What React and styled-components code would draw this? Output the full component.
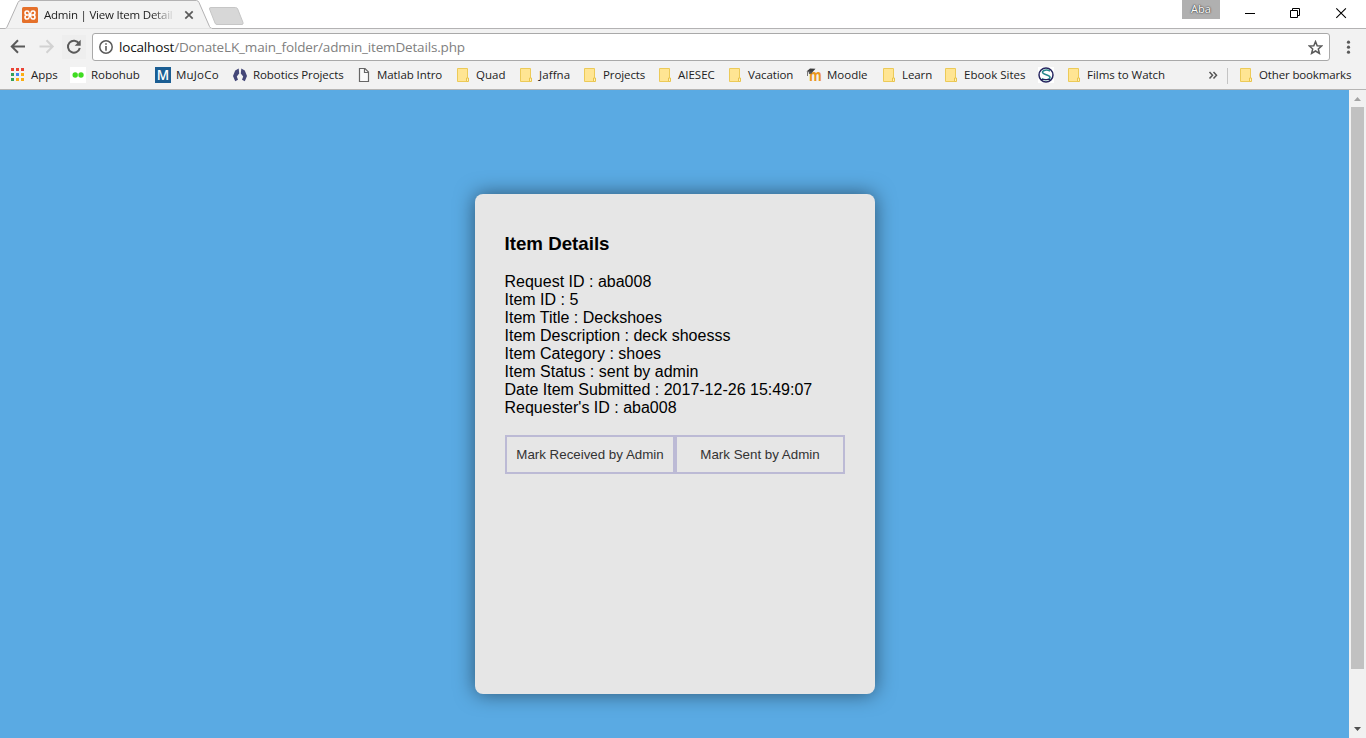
import React from 'react';
import styled, { createGlobalStyle } from 'styled-components';

const Global = createGlobalStyle`
  * { box-sizing: border-box; }
  html, body { margin: 0; padding: 0; overflow: hidden; }
  svg { display: block; flex: none; }
`;

const ui = '"Open Sans", "Noto Sans", sans-serif';

const Browser = styled.div`
  width: 1366px;
  height: 738px;
  display: flex;
  flex-direction: column;
  overflow: hidden;
  font-family: ${ui};
  background: #fff;
`;

const TitleBar = styled.header`
  height: 29px;
  flex: none;
  display: flex;
  background: #fff;
  border-bottom: 1px solid #b3b2b3;
`;

const Tab = styled.div`
  position: relative;
  width: 209px;
  height: 29px;
  padding: 0 0 0 22px;
  display: flex;
  align-items: center;
`;

const TabShape = styled.svg`
  position: absolute;
  left: 0;
  top: 0;
`;

const TabContent = styled.div`
  position: relative;
  display: flex;
  align-items: center;
  height: 29px;
`;

const TabTitle = styled.span`
  width: 131px;
  margin-left: 6px;
  white-space: nowrap;
  font-size: 11.5px;
  line-height: 20px;
  letter-spacing: -0.22px;
  color: #222;
  mask-image: linear-gradient(to right, #000 108px, transparent 131px);
`;

const CloseTab = styled.svg`
  margin-left: 9px;
`;

const Spacer = styled.div`
  flex: 1;
`;

const Profile = styled.div`
  width: 38px;
  height: 19px;
  background: #b0b0b0;
  color: #fff;
  font-size: 11px;
  line-height: 18px;
  text-align: center;
  text-shadow: 0 0 2px #333, 0 0 1px #333;
`;

const WindowButtons = styled.div`
  display: flex;
  width: 146px;
  height: 28px;
  padding-left: 7px;
`;

const Toolbar = styled.div`
  height: 34px;
  flex: none;
  display: flex;
  align-items: center;
  padding: 2px 0 0 8px;
  background: #f2f2f2;
`;

const NavButton = styled.div`
  width: 24px;
  height: 24px;
  margin-right: ${(p) => p.$gap || 0}px;
  display: flex;
  align-items: center;
  justify-content: center;
  background: ${(p) => (p.$active ? '#eeeeee' : 'transparent')};
`;

const AddressBar = styled.div`
  width: 1238px;
  height: 28px;
  margin-left: 6px;
  padding: 0 6px 0 6px;
  display: flex;
  align-items: center;
  background: #fff;
  border: 1px solid #a9a9a9;
  border-radius: 3px;
`;

const Url = styled.span`
  flex: 1;
  margin-left: 6px;
  font-size: 13.5px;
  line-height: 24px;
  letter-spacing: -0.16px;
  color: #808080;
  white-space: nowrap;
`;

const Host = styled.span`
  color: #111;
`;

const Menu = styled.svg`
  margin-left: 10px;
`;

const Bookmarks = styled.nav`
  height: 27px;
  flex: none;
  display: flex;
  padding: 0 0 2px 10px;
  background: #f2f2f2;
  border-bottom: 1px solid #b6b5b4;
`;

const Bookmark = styled.div`
  width: ${(p) => p.$width}px;
  display: flex;
  align-items: center;
  gap: 5px;
  flex: none;
`;

const Label = styled.span`
  font-size: 11.5px;
  line-height: 20px;
  letter-spacing: ${(p) => p.$track || 0}px;
  color: #222;
  white-space: nowrap;
`;

const Divider = styled.div`
  width: 1px;
  height: 16px;
  margin: 5px 10px 0 9px;
  background: #c4c4c4;
`;

const Viewport = styled.div`
  flex: 1;
  min-height: 0;
  display: flex;
`;

const Page = styled.main`
  flex: 1;
  display: flex;
  justify-content: center;
  align-items: flex-start;
  padding: 104px 0 0 1px;
  background: #5aaae3;
  overflow: hidden;
  font-family: "Liberation Sans", Arial, sans-serif;
`;

const Card = styled.section`
  width: 400px;
  height: 500px;
  padding: 39px 30px 0;
  border-radius: 8px;
  background: #e6e6e6;
  box-shadow: 0 0 20px rgba(0, 0, 0, 0.5);
`;

const Heading = styled.h3`
  margin: 0 0 19px -0.5px;
  font-size: 18.72px;
  line-height: 21px;
  color: #000;
`;

const Detail = styled.div`
  margin-left: -0.5px;
  font-size: 16px;
  line-height: 18px;
  color: #000;
  white-space: nowrap;
`;

const Actions = styled.div`
  display: flex;
  margin-top: 18px;
`;

const Action = styled.button`
  width: 170px;
  height: 39px;
  padding: 0;
  border: 2px solid #bcbad5;
  background: transparent;
  font-family: "Liberation Sans", Arial, sans-serif;
  font-size: 13.333px;
  color: #333;
  white-space: nowrap;
`;

const Scrollbar = styled.div`
  width: 17px;
  flex: none;
  display: flex;
  flex-direction: column;
  align-items: center;
  background: #f1f1f1;
`;

const Thumb = styled.div`
  width: 13px;
  height: 562px;
  background: #c1c1c1;
`;

const Folder = () => (
  <svg width="16" height="16" viewBox="0 0 16 16">
    <path d="M2.500 1.500h10v13h-10z" fill="#ffe593" stroke="#ecca58" />
    <path d="M11.500 11h2v3.500h-2z" fill="#fff0bb" stroke="#e9c44c" />
  </svg>
);

const gridColors = ['#ea4335', '#ea4335', '#ea4335', '#34a05a', '#4285f4', '#fbae13', '#34a05a', '#fbae13', '#fbae13'];
const AppsIcon = () => (
  <svg width="16" height="16" viewBox="0 0 16 16">
    {gridColors.map((c, i) => (
      <rect key={i} x={1 + (i % 3) * 5} y={1 + Math.floor(i / 3) * 5} width="3" height="3" fill={c} />
    ))}
  </svg>
);

const RobohubIcon = () => (
  <svg width="16" height="16">
    <rect width="16" height="16" fill="#fff" />
    <circle cx="5.200" cy="8" r="2.700" fill="#3fdc21" />
    <circle cx="11" cy="8" r="2.700" fill="#3fdc21" />
  </svg>
);

const MujocoIcon = () => (
  <svg width="16" height="16">
    <rect width="16" height="16" fill="#1b5e93" />
    <text x="8" y="13" textAnchor="middle" fontFamily="Open Sans" fontSize="13.500" fontWeight="600" fill="#fff">M</text>
  </svg>
);

const RoboticsIcon = () => (
  <svg width="16" height="16" viewBox="0 0 16 16" fill="#444778">
    <path d="M6.700 1.500 3.200 3.600 1 9l2.200 5.200 2.800-1.500L4.800 9.400l2.400-3z" />
    <path d="M9.300 1.500l3.500 2.100L15 9l-2.200 5.200-2.800-1.500 1.200-3.300-2.400-3z" />
  </svg>
);

const FileIcon = () => (
  <svg width="16" height="16" viewBox="0 0 16 16" fill="#fafafa" stroke="#666" strokeWidth="1.200">
    <path d="M3.500 1.500h5.500l3.500 3.500v9.500h-9z" />
    <path d="M8.500 1.500v4h4" fill="none" />
  </svg>
);

const MoodleIcon = () => (
  <svg width="16" height="16" viewBox="0 0 16 16">
    <text x="3" y="14" fontFamily="Open Sans" fontSize="16" fontWeight="700" textLength="12.800" lengthAdjust="spacingAndGlyphs" fill="#eb971f">m</text>
    <path d="M.5 4.500 4 1.500 9.500 1.800 6.300 5.300z" fill="#3d3d3d" />
    <path d="M2.500 4.500 3 7l3-.5.5-2" fill="#555" />
    <path d="M1.500 4.500V9" stroke="#777" fill="none" />
  </svg>
);

const SwirlIcon = () => (
  <svg width="16" height="16" viewBox="0 0 16 16" fill="none">
    <rect width="16" height="16" fill="#fff" />
    <circle cx="8" cy="8" r="7" fill="#fff" stroke="#26265f" strokeWidth="1.500" />
    <path d="M12 4.200C9.500 2.400 4.500 2.800 4.500 5.300S12 7.700 12 10.300s-5.500 3.200-8 1.200" stroke="#26898c" strokeWidth="1.500" />
    <path d="M3 12.500h9.500" stroke="#26265f" />
  </svg>
);

const bookmarks = [
  { icon: AppsIcon, label: 'Apps', width: 60 },
  { icon: RobohubIcon, label: 'Robohub', width: 85, track: -0.05 },
  { icon: MujocoIcon, label: 'MuJoCo', width: 77, track: 0.2 },
  { icon: RoboticsIcon, label: 'Robotics Projects', width: 124, track: -0.08 },
  { icon: FileIcon, label: 'Matlab Intro', width: 99, track: -0.08 },
  { icon: Folder, label: 'Quad', width: 63 },
  { icon: Folder, label: 'Jaffna', width: 64, track: 0.1 },
  { icon: Folder, label: 'Projects', width: 75, track: -0.1 },
  { icon: Folder, label: 'AIESEC', width: 70 },
  { icon: Folder, label: 'Vacation', width: 79, track: -0.1 },
  { icon: MoodleIcon, label: 'Moodle', width: 75 },
  { icon: Folder, label: 'Learn', width: 62, track: -0.1 },
  { icon: Folder, label: 'Ebook Sites', width: 95 },
  { icon: SwirlIcon, label: '', width: 28 },
  { icon: Folder, label: 'Films to Watch', width: 142, track: -0.03 },
];

const details = [
  ['Request ID', 'aba008'],
  ['Item ID', '5'],
  ['Item Title', 'Deckshoes'],
  ['Item Description', 'deck shoesss'],
  ['Item Category', 'shoes'],
  ['Item Status', 'sent by admin'],
  ['Date Item Submitted', '2017-12-26 15:49:07'],
  ["Requester's ID", 'aba008'],
];

export default function App() {
  return (
    <Browser>
      <Global />
      <TitleBar>
        <Tab>
          <TabShape width="250" height="29" viewBox="0 0 250 29">
            <path d="M0 28.500H4.500C6 28.500 6.500 28 7 27L18 2.500Q19 .5 20.500 .5H196.500Q198 .5 199 2.500L209.500 26.500Q210.500 28.500 212 28.500" fill="#f2f2f2" stroke="#b3b2b3" />
            <path d="M5.500 29V28.500H212V29z" fill="#f2f2f2" />
            <path d="M211 7.500H235.500Q237 7.500 237.700 9L243 22.500Q243.500 24.500 242 24.500H217Q215.500 24.500 215 23L209.500 9Q209 7.500 211 7.500z" fill="#d7d7d7" stroke="#c6c6c6" />
          </TabShape>
          <TabContent>
            <svg width="16" height="16" viewBox="0 0 16 16">
              <rect width="16" height="16" rx="1.500" fill="#e5702a" />
              <path d="M7 5.700A2 2 0 1 0 5 8H11A2 2 0 1 0 9 5.700M7 10.300A2 2 0 1 1 5 8M11 8A2 2 0 1 1 9 10.300M7 5.700 9 10.300M9 5.700 7 10.300" fill="none" stroke="#fff" strokeWidth="1.600" />
            </svg>
            <TabTitle>Admin | View Item Detail</TabTitle>
            <CloseTab width="10" height="10" viewBox="0 0 10 10">
              <path d="M1.300 1.300 8.700 8.700M8.700 1.300 1.300 8.700" stroke="#5a5a5a" strokeWidth="1.700" />
            </CloseTab>
          </TabContent>
        </Tab>
        <Spacer />
        <Profile>Aba</Profile>
        <WindowButtons>
          <svg width="139" height="28" viewBox="0 0 139 28" fill="none" stroke="#000">
            <path d="M18 13.500h10M63.500 10.500h7v7h-7zM65.500 10.500v-2h7v7h-2" />
            <path d="M109.300 8.300l9.600 9.600M118.900 8.300l-9.600 9.600" strokeWidth="1.100" />
          </svg>
        </WindowButtons>
      </TitleBar>
      <Toolbar>
        <NavButton $gap={4}>
          <svg width="24" height="24" viewBox="0 0 24 24" fill="none" stroke="#5a5a5a" strokeWidth="2">
            <path d="M17 11.500H4M10 5.300 3.800 11.500 10 17.700" />
          </svg>
        </NavButton>
        <NavButton $gap={2}>
          <svg width="24" height="24" viewBox="0 0 24 24" fill="none" stroke="#d2d2d2" strokeWidth="2">
            <path d="M3.500 11.500h13M10.500 5.300l6.200 6.200-6.200 6.200" />
          </svg>
        </NavButton>
        <NavButton $active>
          <svg width="24" height="24" viewBox="0 0 24 24">
            <path d="M17 8.400A6 6 0 1 0 17.800 13" fill="none" stroke="#5a5a5a" strokeWidth="2" />
            <path d="M18.700 4.700v6h-6z" fill="#5a5a5a" />
          </svg>
        </NavButton>
        <AddressBar>
          <svg width="14" height="14" viewBox="0 0 14 14">
            <circle cx="7" cy="7" r="6.200" fill="none" stroke="#5a5a5a" strokeWidth="1.500" />
            <path d="M6.200 3.200h1.600v1.600H6.200zM6.200 6h1.600v4.800H6.200z" fill="#5a5a5a" />
          </svg>
          <Url><Host>localhost</Host>/DonateLK_main_folder/admin_itemDetails.php</Url>
          <svg width="15" height="15" viewBox="0 0 15 15">
            <path d="M7.500 1.600 9.200 5.700 13.700 6 10.300 9l1.100 4.400-3.900-2.400-3.900 2.400L4.700 9 1.300 6l4.500-.3z" fill="none" stroke="#5a5a5a" strokeWidth="1.500" />
          </svg>
        </AddressBar>
        <Menu width="16" height="16" viewBox="0 0 16 16" fill="#5a5a5a">
          <circle cx="8.500" cy="3.200" r="1.600" /><circle cx="8.500" cy="8.200" r="1.600" /><circle cx="8.500" cy="13.200" r="1.600" />
        </Menu>
      </Toolbar>
      <Bookmarks>
        {bookmarks.map(({ icon: Icon, label, width, track }, i) => (
          <Bookmark key={i} $width={width}>
            <Icon />
            {label && <Label $track={track}>{label}</Label>}
          </Bookmark>
        ))}
        <svg width="10" height="25" viewBox="0 0 10 25" fill="none" stroke="#555" strokeWidth="1.500">
          <path d="M1.500 9l3 3.200-3 3.200M5.500 9l3 3.200-3 3.200" />
        </svg>
        <Divider />
        <Bookmark $width={128}>
          <Folder />
          <Label $track={-0.14}>Other bookmarks</Label>
        </Bookmark>
      </Bookmarks>
      <Viewport>
        <Page>
          <Card>
            <Heading>Item Details</Heading>
            {details.map(([name, value]) => (
              <Detail key={name}>{name} : {value}</Detail>
            ))}
            <Actions>
              <Action>Mark Received by Admin</Action>
              <Action>Mark Sent by Admin</Action>
            </Actions>
          </Card>
        </Page>
        <Scrollbar>
          <svg width="17" height="17"><path d="M5 11h7L8.500 7z" fill="#a3a3a3" /></svg>
          <Thumb />
          <Spacer />
          <svg width="17" height="17"><path d="M5 6h7l-3.500 4z" fill="#505050" /></svg>
        </Scrollbar>
      </Viewport>
    </Browser>
  );
}
